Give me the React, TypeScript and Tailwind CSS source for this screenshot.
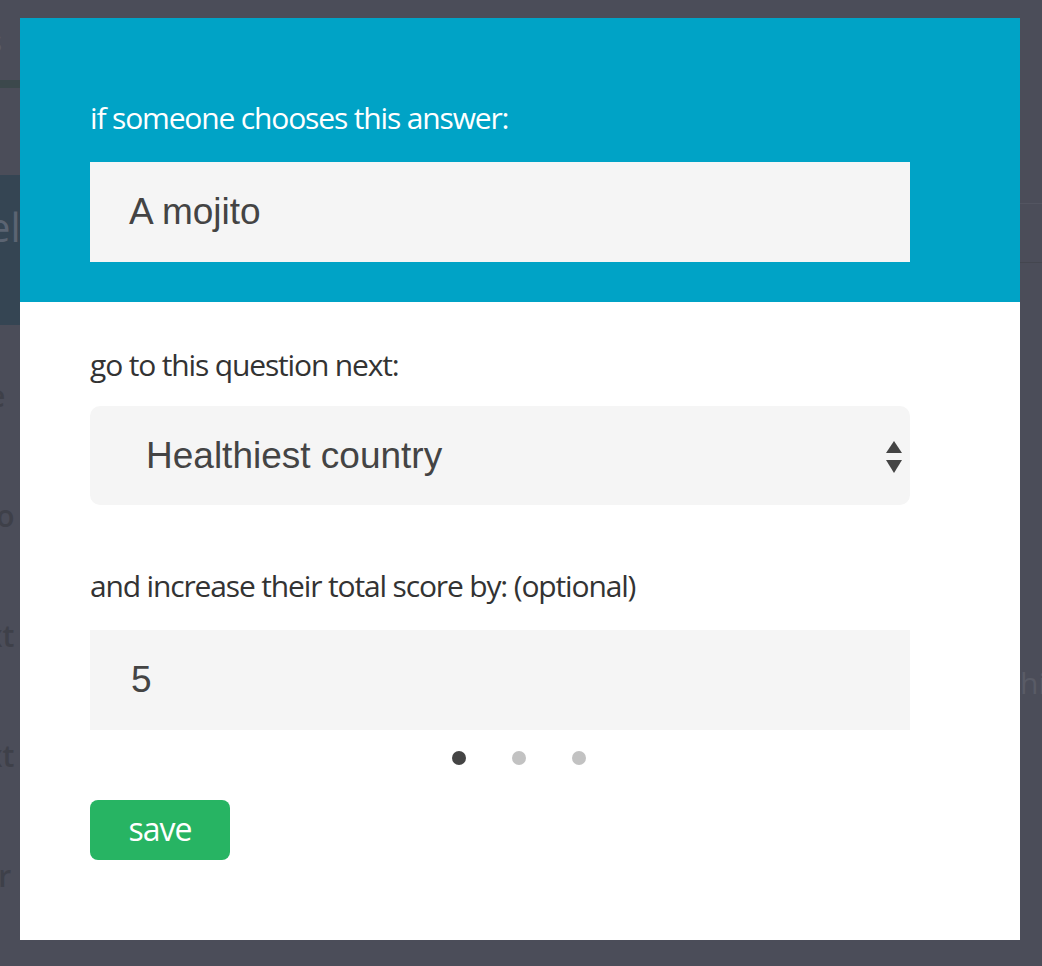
import { useState } from 'react'

const label = "font-['Open_Sans',sans-serif] text-[30px] leading-[38px] tracking-[-1.15px]"
const field = "font-['Liberation_Sans',Arial,sans-serif] text-[37px] text-[#444]"

function Backdrop() {
  // faded page that sits behind the modal overlay
  return (
    <div className="absolute inset-0 flex justify-between overflow-hidden font-['Open_Sans',sans-serif] text-[30px] font-semibold text-[#3e4049]">
      <div className="flex w-[20px] flex-col">
        <div className="ml-[-12px] mt-[18px] h-[62px] font-normal text-[#5a5c66]">s</div>
        <div className="h-[8px] bg-[#3c484c]" />
        <div className="mt-[87px] h-[150px] bg-[#354553] pt-[22px]">
          <div className="ml-[-12px] text-[40px] font-normal text-[#5b6472]">el</div>
        </div>
        <div className="ml-[-22px] flex flex-col gap-[78px] pt-[50px] leading-[42px]">
          <span className="pl-[10px]">e</span>
          <span>oo</span>
          <span className="pl-[8px]">xt</span>
          <span className="pl-[8px]">xt</span>
          <span className="pl-[2px]">or</span>
        </div>
      </div>
      <div className="flex w-[22px] flex-col">
        <div className="mt-[203px] h-px bg-[#535561]" />
        <div className="mt-[58px] h-px bg-[#44464f]" />
        <div className="mt-[397px] font-normal text-[#595b66]">hig</div>
      </div>
    </div>
  )
}

export default function App() {
  const [step] = useState(0)

  return (
    <div className="relative min-h-[966px] w-full bg-[#4b4d59] pt-[18px] pl-[20px]">
      <Backdrop />
      <div className="relative flex h-[922px] w-[1000px] flex-col bg-white">
        <div className="h-[284px] bg-[#00a3c6] pl-[70px] pr-[110px] pt-[81px]">
          <div className={`${label} text-white`}>if someone chooses this answer:</div>
          <div className={`mt-[25px] flex h-[100px] items-center bg-[#f5f5f5] px-[39px] ${field}`}>
            A mojito
          </div>
        </div>

        <div className="pl-[70px] pr-[110px] pt-[44px]">
          <div className={`${label} text-[#333]`}>go to this question next:</div>
          <div className={`mt-[22px] flex h-[99px] items-center justify-between rounded-[10px] bg-[#f5f5f5] pl-[56px] pr-[8px] ${field}`}>
            <span>Healthiest country</span>
            <svg width="16" height="32" viewBox="0 0 16 32" className="mt-[3px]">
              <path d="M8 0 L16 12 L0 12 Z" fill="#444" />
              <path d="M0 19 L16 19 L8 32 Z" fill="#444" />
            </svg>
          </div>

          <div className={`mt-[62px] ${label} text-[#333]`}>and increase their total score by: (optional)</div>
          <div className={`mt-[25px] flex h-[100px] items-center bg-[#f5f5f5] px-[41px] ${field}`}>5</div>

          <div className="mt-[21px] flex justify-center gap-[46px] pl-[38px]">
            {[0, 1, 2].map((i) => (
              <span
                key={i}
                className={`h-[14px] w-[14px] rounded-full ${i === step ? 'bg-[#444]' : 'bg-[#c2c2c2]'}`}
              />
            ))}
          </div>

          <button className="mt-[35px] flex h-[60px] w-[140px] items-center justify-center rounded-[8px] bg-[#27b463] pb-[2px] font-['Open_Sans',sans-serif] text-[32px] tracking-[-1px] text-white">
            save
          </button>
        </div>
      </div>
    </div>
  )
}
